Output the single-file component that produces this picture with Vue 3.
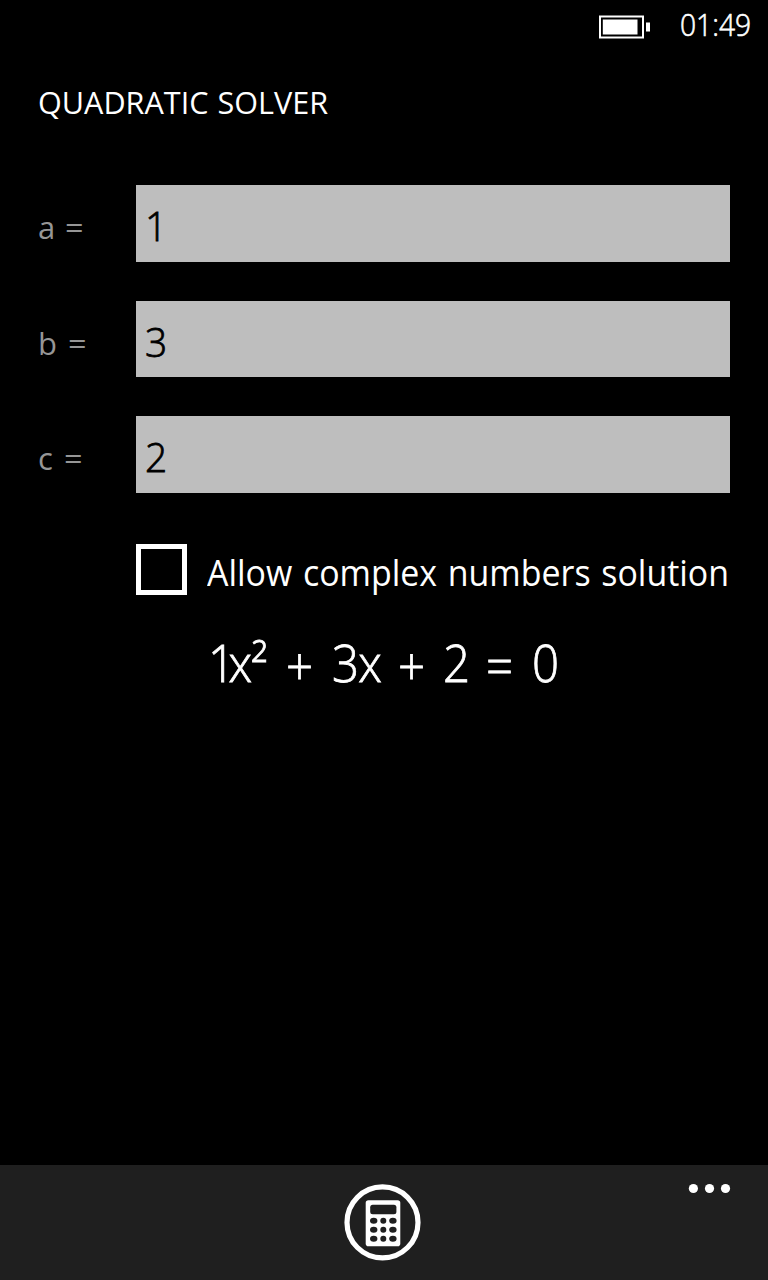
<script setup>
import { ref } from 'vue'

const coefficients = ref([
  { name: 'a', value: '1' },
  { name: 'b', value: '3' },
  { name: 'c', value: '2' },
])
const rows = [1220.8, 1229.8, 1238.8]
const columns = [
  { x: 373.7, rx: 3.7 },
  { x: 383.3, rx: 3 },
  { x: 392.9, rx: 3.7 },
]
</script>

<template>
  <div class="phone">
    <header class="status">
      <svg class="battery" width="52" height="24" viewBox="599 15 52 24">
        <rect x="600" y="16.5" width="43" height="21" fill="none" stroke="#fff" stroke-width="2" />
        <rect x="602.8" y="19.5" width="34.7" height="15" fill="#fff" />
        <rect x="646" y="22.5" width="4" height="9" fill="#fff" />
      </svg>
      <span class="clock">01:49</span>
    </header>

    <h1 class="title"><span>QUADRATIC SOLVER</span></h1>

    <main class="form">
      <div v-for="c in coefficients" :key="c.name" class="row">
        <div class="label"><span class="name" :class="c.name">{{ c.name }}</span><span class="eq">=</span></div>
        <div class="field"><span>{{ c.value }}</span></div>
      </div>
    </main>

    <div class="check">
      <span class="box"></span>
      <span class="check-text">Allow complex numbers solution</span>
    </div>

    <div class="equation">
      <span class="t1"><span class="one">1</span>x<span class="sq">²</span></span><span class="t2 op">+</span><span class="t3">3x</span><span class="t4 op">+</span><span class="t5">2</span><span class="t6 op">=</span><span class="t7">0</span>
    </div>

    <footer class="appbar">
      <svg class="calc" width="78" height="78" viewBox="343 1183 78 78">
        <circle cx="382.5" cy="1222.4" r="35.5" fill="none" stroke="#fff" stroke-width="5.2" />
        <rect x="365.7" y="1200.2" width="34.6" height="46" rx="2.8" fill="#fff" />
        <rect x="370.2" y="1204.8" width="26.2" height="9.4" rx="2.5" fill="#1f1f1f" />
        <template v-for="y in rows" :key="y">
          <ellipse v-for="col in columns" :key="col.x" :cx="col.x" :cy="y" :rx="col.rx" ry="3" fill="#1f1f1f" />
        </template>
      </svg>
      <svg class="more" width="43" height="11" viewBox="688 1183 43 11">
        <circle cx="693.4" cy="1188.5" r="4.6" fill="#fff" />
        <circle cx="709.5" cy="1188.5" r="4.6" fill="#fff" />
        <circle cx="725.5" cy="1188.5" r="4.6" fill="#fff" />
      </svg>
    </footer>
  </div>
</template>

<style>
body { background: #000; }
</style>

<style scoped>
.phone {
  width: 768px;
  height: 1280px;
  background: #000;
  color: #fff;
  font-family: "Open Sans", "Noto Sans", sans-serif;
  display: flex;
  flex-direction: column;
  overflow: hidden;
}
.phone span { white-space: nowrap; }
.status { height: 50px; flex: none; display: flex; align-items: flex-start; }
.battery { margin: 15px 0 0 599px; flex: none; }
.clock {
  margin-left: 29px;
  font-size: 31px;
  line-height: 48px;
  font-weight: 300;
  -webkit-text-stroke: 0.6px #fff;
  display: inline-block;
  transform: scaleX(0.91);
  transform-origin: left;
}
.title {
  margin: 31px 0 0 38px;
  height: 40px;
  font-size: 31.5px;
  line-height: 41px;
  font-weight: 400;
}
.title span { display: inline-block; word-spacing: 1px; transform: scaleX(0.971); transform-origin: left; }
.form { margin-top: 64.3px; display: flex; flex-direction: column; gap: 38.4px; }
.row { display: flex; height: 76.9px; padding-left: 38px; }
.label {
  width: 98px;
  flex: none;
  display: flex;
  color: #969696;
  font-size: 31px;
  line-height: 84px;
}
.name { width: 27px; }
.name.b { width: 30px; }
.name.c { width: 26px; }
.eq { display: inline-block; transform: scaleX(1.05); transform-origin: left; }
.field {
  width: 594px;
  background: #bebebe;
  color: #000;
  font-size: 41px;
  line-height: 80px;
  font-weight: 300;
  -webkit-text-stroke: 0.8px #000;
  box-sizing: border-box;
  padding-left: 9px;
}
.field span { display: inline-block; transform: scaleX(0.95); transform-origin: left; }
.check { margin-top: 51.3px; padding-left: 136px; display: flex; height: 51px; }
.box { width: 51px; height: 51px; border: 5px solid #fff; box-sizing: border-box; flex: none; }
.check-text {
  margin-left: 20px;
  font-size: 36px;
  line-height: 58px;
  word-spacing: 2px;
  display: inline-block;
  transform: scaleX(0.942);
  transform-origin: left;
}
.equation {
  margin: 32px 0 0 208px;
  height: 70px;
  line-height: 70px;
  font-size: 51px;
  font-weight: 300;
  -webkit-text-stroke: 0.8px #fff;
  display: flex;
}
.equation > span { display: block; flex: none; transform: scaleX(0.93); transform-origin: left; }
.equation > .op { padding-top: 3px; }
.one { letter-spacing: -7px; }
.sq { position: relative; top: 1px; left: -1px; }
.t1 { width: 78px; }
.t2 { width: 46px; }
.t3 { width: 66px; letter-spacing: -1px; }
.t4 { width: 45px; }
.t5 { width: 43px; }
.t6 { width: 46px; }
.appbar { margin-top: auto; height: 115px; background: #1f1f1f; display: flex; align-items: flex-start; flex: none; }
.calc { margin: 18px 0 0 343px; flex: none; }
.more { margin: 18px 0 0 267px; flex: none; }
</style>
